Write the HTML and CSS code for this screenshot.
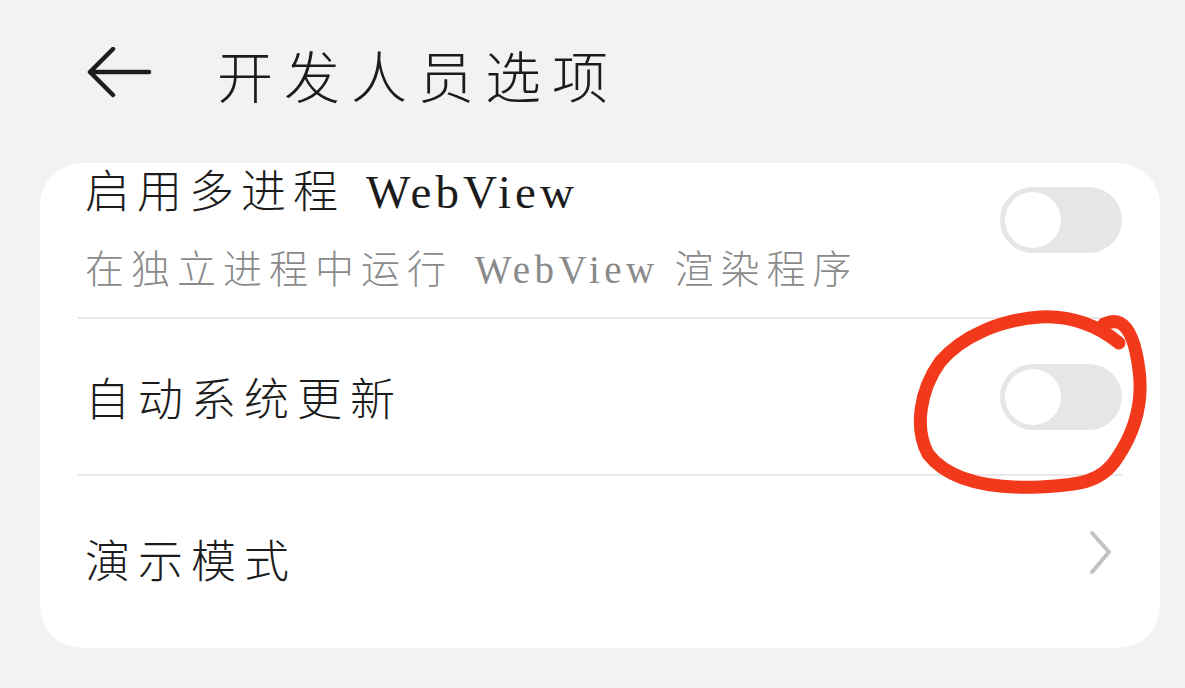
FILE: index.html
```html
<!DOCTYPE html>
<html lang="zh-CN">
<head>
<meta charset="utf-8">
<title>开发人员选项</title>
<link rel="stylesheet" href="styles.css">
</head>
<body>
<div class="page">
  <header class="header">
    <svg class="back" width="66" height="52" viewBox="0 0 66 52">
      <path d="M62 25 H3 M26 2 L3 25 L26 48" fill="none" stroke="#1c1c1c" stroke-width="4.5" stroke-linecap="round" stroke-linejoin="round"/>
    </svg>
    <h1 class="title">开发人员选项</h1>
  </header>

  <section class="card">
    <div class="row row-top">
      <div class="texts">
        <div class="label">启用多进程 <span class="latin">WebView</span></div>
        <div class="sub">在独立进程中运行 <span class="latin">WebView</span> 渲染程序</div>
      </div>
      <div class="toggle toggle-top"><span class="knob"></span></div>
    </div>
    <div class="row">
      <div class="label">自动系统更新</div>
      <div class="toggle"><span class="knob"></span></div>
    </div>
    <div class="row row-last">
      <div class="label">演示模式</div>
      <svg class="chev" width="26" height="46" viewBox="0 0 26 46">
        <path d="M4 3 L21 22 L4 42" fill="none" stroke="#c2c2c2" stroke-width="4" stroke-linecap="round" stroke-linejoin="round"/>
      </svg>
    </div>
  </section>
</div>
<svg class="annot" width="1185" height="688" viewBox="0 0 1185 688">
  <path d="M1119,343 C1100,327 1072,315 1040,317 C1000,320 962,336 940,362 C920,390 914,428 928,454 C948,480 990,489 1040,487 C1080,485 1102,482 1117,458 C1136,430 1143,400 1139,370 C1136,346 1130,328 1120,323 C1114,320 1109,322 1104,324" fill="none" stroke="#f2391b" stroke-width="13" stroke-linecap="round" stroke-linejoin="round"/>
</svg>
</body>
</html>
```

FILE: styles.css
```css
html, body {
  margin: 0;
  padding: 0;
  background: #f1f2f4;
}
body {
  width: 1185px;
  height: 688px;
  overflow: hidden;
  position: relative;
  font-family: "Noto Sans CJK SC", "Liberation Serif", sans-serif;
  color: #1c1c1c;
}
.page {
  display: flex;
  flex-direction: column;
}
.header {
  display: flex;
  align-items: center;
  height: 150px;
  padding-left: 87px;
  padding-bottom: 2px;
  box-sizing: border-box;
}
.back {
  display: block;
  flex: none;
  margin-top: -2px;
}
.title {
  margin: 0 0 0 64px;
  font-size: 56px;
  font-weight: 300;
  letter-spacing: 11px;
  line-height: 1;
}
.card {
  margin: 13px 25px 0 40px;
  background: #ffffff;
  border-radius: 42px;
  padding: 0 38px 15px 38px;
  display: flex;
  flex-direction: column;
}
.row {
  display: flex;
  align-items: center;
  justify-content: space-between;
  height: 157px;
  padding-left: 7px;
  border-bottom: 2px solid #e9e9e9;
  box-sizing: border-box;
}
.row-top {
  align-items: flex-start;
  height: 156px;
}
.row-last {
  border-bottom: none;
  padding-top: 8px;
}
.texts {
  display: flex;
  flex-direction: column;
  margin-top: -4px;
}
.label {
  font-size: 45px;
  line-height: 60px;
  letter-spacing: 8px;
  font-weight: 300;
  color: #1c1c1c;
}
.row-top .label {
  letter-spacing: 7px;
}
.sub {
  font-size: 39px;
  line-height: 56px;
  margin-top: 16px;
  letter-spacing: 7px;
  font-weight: 300;
  color: #8a8a8a;
}
.latin {
  font-family: "Liberation Serif", serif;
  letter-spacing: 4px;
  font-weight: 400;
}
.label .latin {
  font-size: 47px;
  margin-left: 4px;
}
.sub .latin {
  margin-left: 6px;
  letter-spacing: 4.5px;
}
.toggle {
  flex: none;
  width: 122px;
  height: 66px;
  border-radius: 33px;
  background: #e6e6e6;
  display: flex;
  align-items: center;
  padding: 0 5px;
  box-sizing: border-box;
}
.toggle-top {
  margin-top: 24px;
}
.knob {
  width: 56px;
  height: 56px;
  border-radius: 50%;
  background: #ffffff;
}
.chev {
  display: block;
  flex: none;
  margin-right: 8px;
  margin-top: -12px;
}
.annot {
  position: absolute;
  left: 0;
  top: 0;
  pointer-events: none;
}
```
